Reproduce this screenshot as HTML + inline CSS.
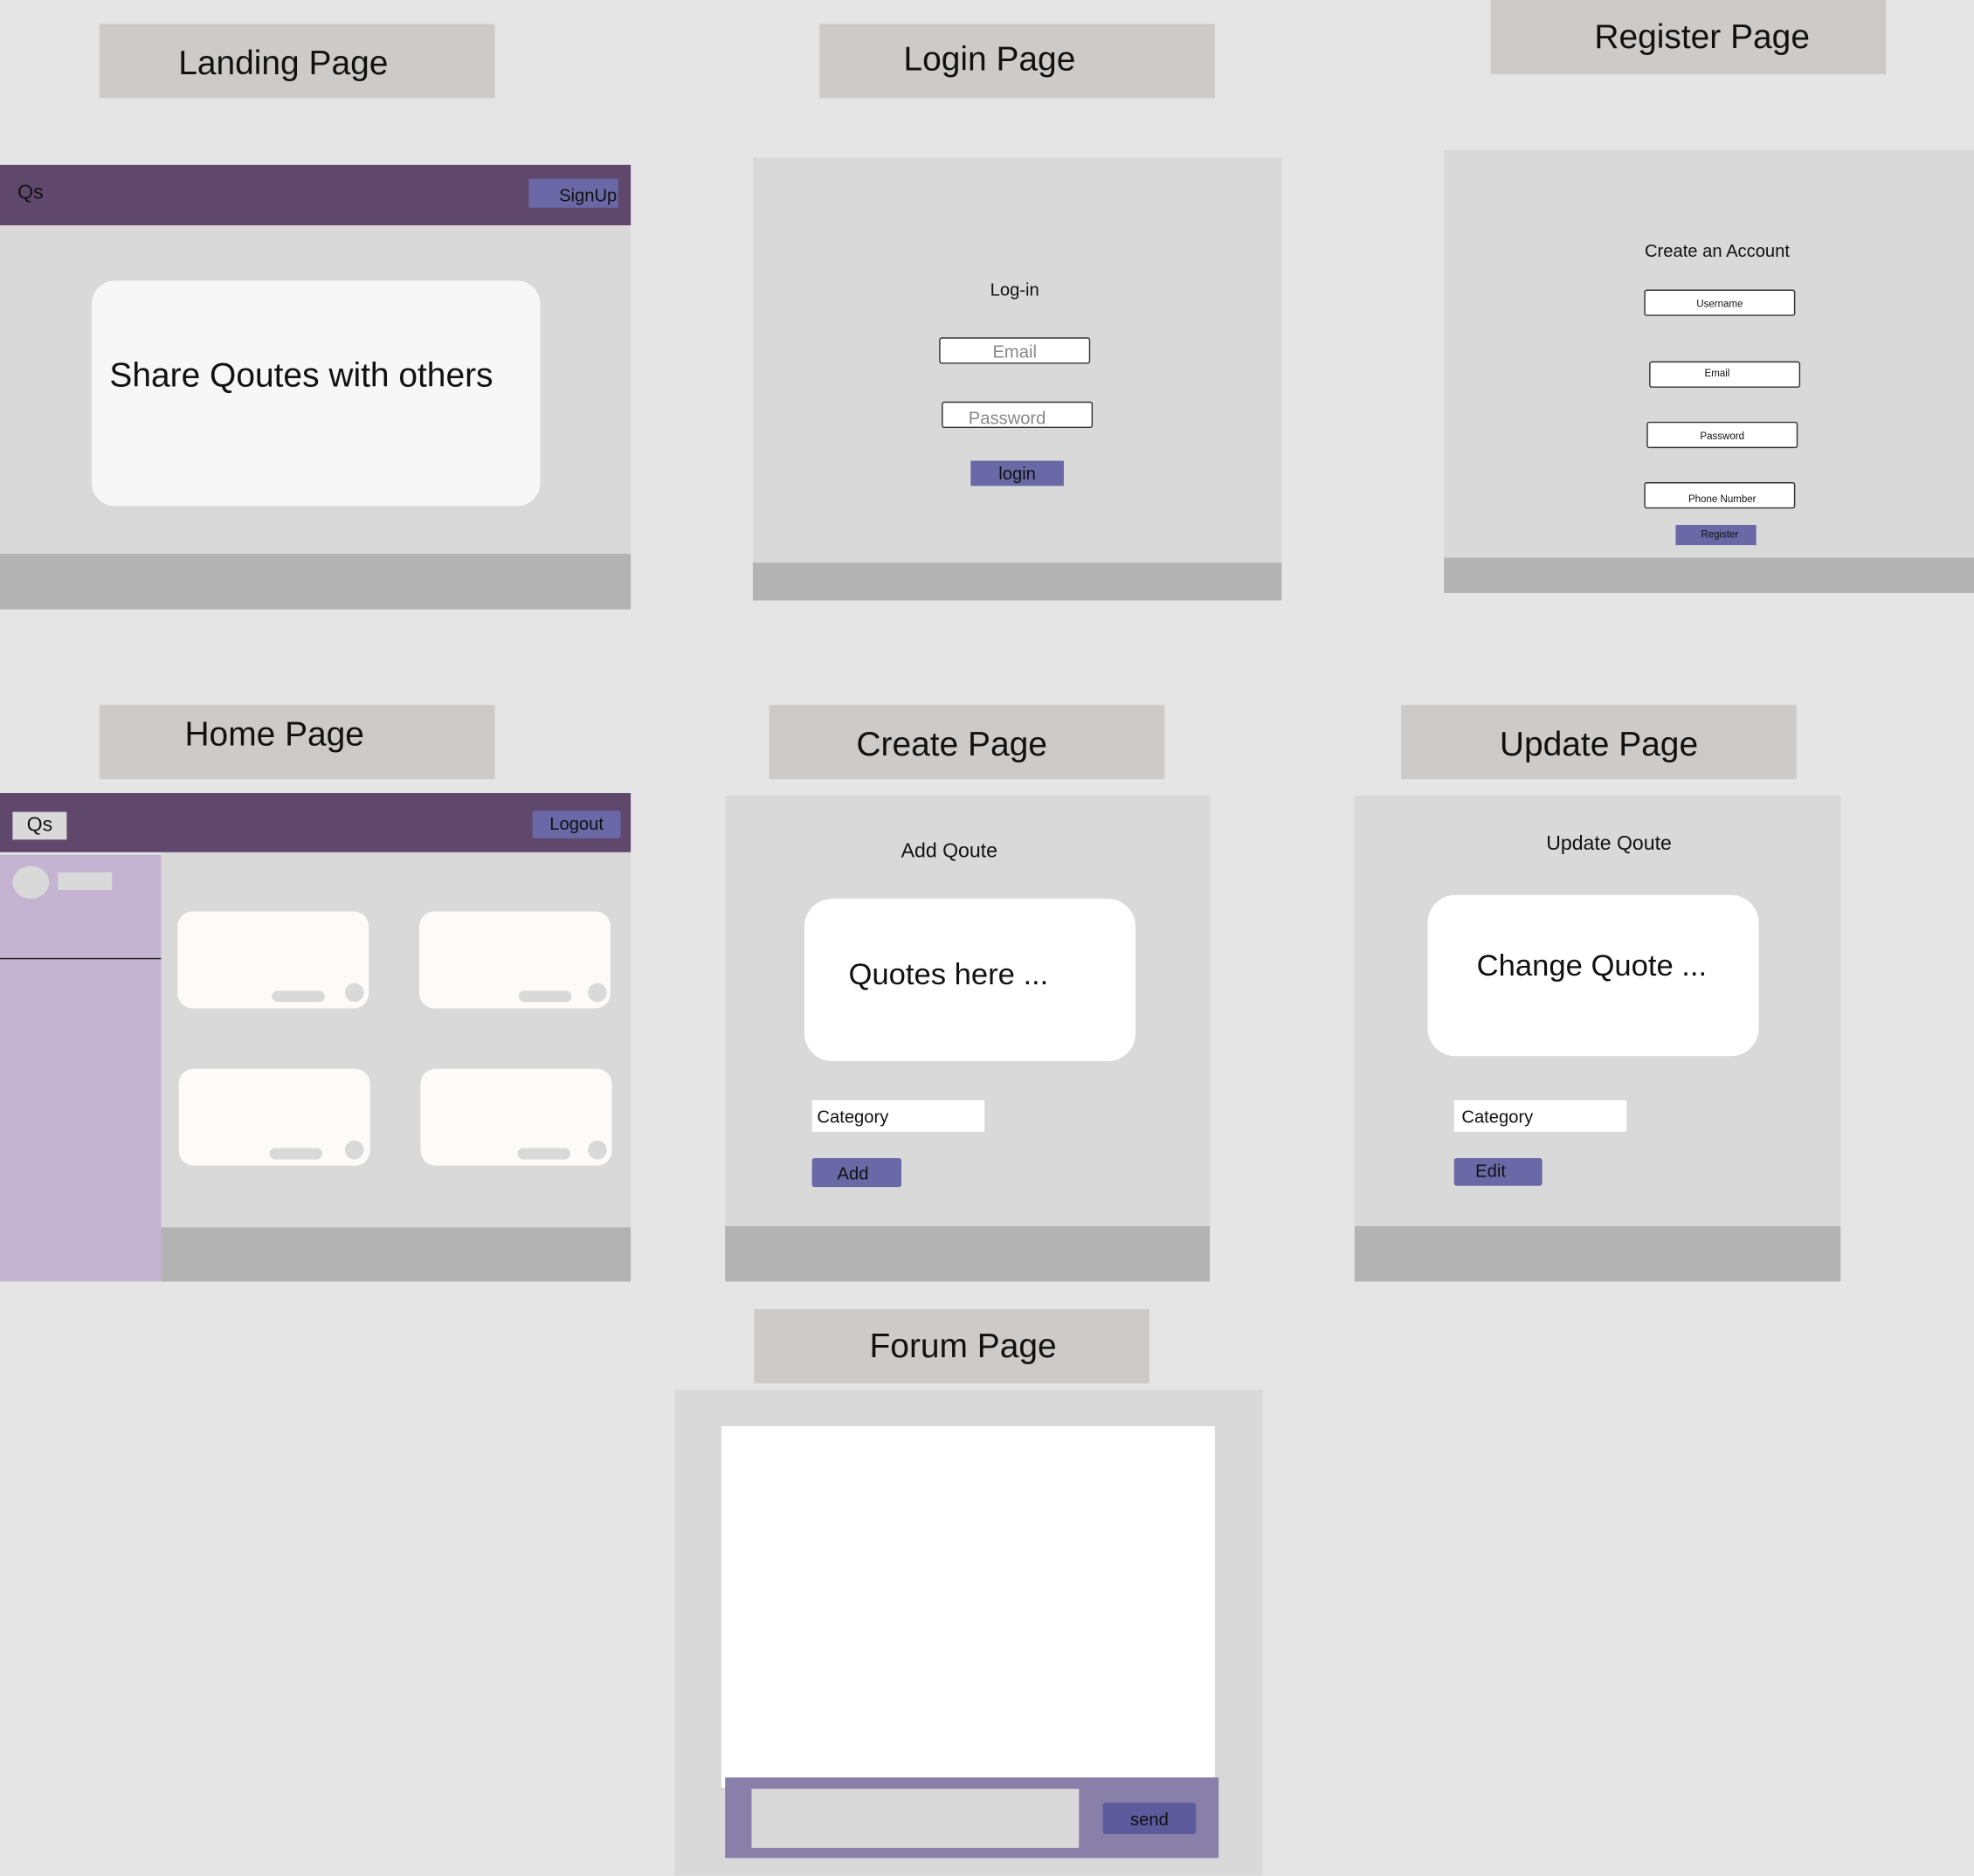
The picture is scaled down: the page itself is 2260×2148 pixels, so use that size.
<!DOCTYPE html>
<html><head><meta charset="utf-8"><style>
html,body{margin:0;padding:0;background:#e5e5e5;overflow:hidden;width:2260px;height:2148px}
#w{position:absolute;left:0;top:0;width:1568px;height:1490px;transform:scale(1.44133);transform-origin:0 0;font-family:"Liberation Sans",sans-serif;color:#111}
#w div{position:absolute;box-sizing:border-box}
.t{background:#cccbc9;width:314px;height:59px;font-size:27px;text-align:center;line-height:59px}
.fr{background:#d9d9d9}
.ft{background:#b3b3b3}
.in{background:#fff;border:1px solid #333;border-radius:2px;text-align:center;color:#888}
.bt{background:#6a68a6;text-align:center;color:#111}
.cd{background:#fcfbf9;border-radius:12px;width:152px;height:77px}
.pl{background:#d9d9d9;border-radius:5px;width:42px;height:9px}
.ci{background:#d9d9d9;border-radius:50%;width:15px;height:15px}
</style></head><body><div id="w">
<!-- Landing -->
<div class="t" style="left:79px;top:19px;line-height:62px;text-indent:-22px">Landing Page</div>
<div class="fr" style="left:0;top:131px;width:501px;height:353px"></div>
<div style="left:0;top:131px;width:501px;height:48px;background:#60486d"></div>
<div style="left:14px;top:145px;font-size:16px">Qs</div>
<div class="bt" style="left:420px;top:142px;width:71px;height:23px;font-size:14px;line-height:26px;text-align:right;padding-right:1px">SignUp</div>
<div style="left:73px;top:223px;width:356px;height:179px;background:#f7f7f7;border-radius:18px;font-size:27px;padding:60px 0 0 14px">Share Qoutes with others</div>
<div class="ft" style="left:0;top:440px;width:501px;height:44px"></div>
<!-- Login -->
<div class="t" style="left:651px;top:19px;line-height:56px;text-indent:-44px">Login Page</div>
<div class="fr" style="left:598px;top:125px;width:420px;height:352px"></div>
<div style="left:598px;top:222px;width:416px;text-align:center;font-size:14px">Log-in</div>
<div class="in" style="left:746px;top:268px;width:120px;height:21px;font-size:14px;line-height:21px">Email</div>
<div class="in" style="left:748px;top:319px;width:120px;height:21px;font-size:14px;line-height:25px;text-indent:-16px">Password</div>
<div class="bt" style="left:771px;top:366px;width:74px;height:20px;font-size:14px;line-height:20px">login</div>
<div class="ft" style="left:598px;top:447px;width:420px;height:30px"></div>
<!-- Register -->
<div class="t" style="left:1184px;top:0;line-height:59px;text-indent:22px">Register Page</div>
<div class="fr" style="left:1147px;top:119px;width:421px;height:352px"></div>
<div style="left:1147px;top:191px;width:434px;text-align:center;font-size:14px">Create an Account</div>
<div class="in" style="left:1306px;top:230px;width:120px;height:21px;font-size:8px;line-height:21px;color:#111">Username</div>
<div class="in" style="left:1310px;top:287px;width:120px;height:21px;font-size:8px;line-height:17px;color:#111;text-indent:-12px">Email</div>
<div class="in" style="left:1308px;top:335px;width:120px;height:21px;font-size:8px;line-height:21px;color:#111">Password</div>
<div class="in" style="left:1306px;top:383px;width:120px;height:21px;font-size:8px;line-height:25px;color:#111;text-indent:4px">Phone Number</div>
<div class="bt" style="left:1331px;top:417px;width:64px;height:16px;font-size:8px;line-height:16px;text-indent:6px">Register</div>
<div class="ft" style="left:1147px;top:443px;width:421px;height:28px"></div>
<!-- Home -->
<div class="t" style="left:79px;top:560px;line-height:46px;text-indent:-36px">Home Page</div>
<div class="fr" style="left:128px;top:677px;width:373px;height:341px"></div>
<div style="left:0;top:630px;width:501px;height:47px;background:#60486d"></div>
<div style="left:10px;top:645px;width:43px;height:22px;background:#d9d9d9;font-size:16px;text-align:center;line-height:22px">Qs</div>
<div class="bt" style="left:423px;top:644px;width:70px;height:22px;font-size:14px;line-height:20px;border-radius:2px">Logout</div>
<div style="left:0;top:679px;width:128px;height:339px;background:#c4b4d2"></div>
<div style="left:0;top:761px;width:128px;height:1px;background:#222"></div>
<div style="left:10px;top:688px;width:29px;height:26px;border-radius:50%;background:#d9d9d9"></div>
<div style="left:46px;top:693px;width:43px;height:14px;background:#d9d9d9"></div>
<div class="cd" style="left:141px;top:724px"></div><div class="pl" style="left:216px;top:787px"></div><div class="ci" style="left:274px;top:781px"></div>
<div class="cd" style="left:333px;top:724px"></div><div class="pl" style="left:412px;top:787px"></div><div class="ci" style="left:467px;top:781px"></div>
<div class="cd" style="left:142px;top:849px"></div><div class="pl" style="left:214px;top:912px"></div><div class="ci" style="left:274px;top:906px"></div>
<div class="cd" style="left:334px;top:849px"></div><div class="pl" style="left:411px;top:912px"></div><div class="ci" style="left:467px;top:906px"></div>
<div class="ft" style="left:128px;top:975px;width:373px;height:43px"></div>
<!-- Create -->
<div class="t" style="left:611px;top:560px;line-height:62px;text-indent:-24px">Create Page</div>
<div class="fr" style="left:576px;top:632px;width:385px;height:386px"></div>
<div style="left:576px;top:668px;width:356px;text-align:center;font-size:16px">Add Qoute</div>
<div style="left:639px;top:714px;width:263px;height:129px;background:#fff;border-radius:22px;font-size:24px;padding:47px 0 0 35px">Quotes here ...</div>
<div style="left:645px;top:874px;width:137px;height:25px;background:#fff;font-size:14px;line-height:26px;padding-left:4px">Category</div>
<div class="bt" style="left:645px;top:920px;width:71px;height:23px;font-size:14px;line-height:25px;border-radius:2px;text-indent:-6px">Add</div>
<div class="ft" style="left:576px;top:974px;width:385px;height:44px"></div>
<!-- Update -->
<div class="t" style="left:1113px;top:560px;line-height:62px">Update Page</div>
<div class="fr" style="left:1076px;top:632px;width:386px;height:386px"></div>
<div style="left:1076px;top:662px;width:404px;text-align:center;font-size:16px">Update Qoute</div>
<div style="left:1134px;top:711px;width:263px;height:128px;background:#fff;border-radius:22px;font-size:24px;padding:43px 0 0 39px">Change Quote ...</div>
<div style="left:1155px;top:874px;width:137px;height:25px;background:#fff;font-size:14px;line-height:26px;padding-left:6px">Category</div>
<div class="bt" style="left:1155px;top:920px;width:70px;height:22px;font-size:14px;line-height:20px;border-radius:2px;text-indent:-12px">Edit</div>
<div class="ft" style="left:1076px;top:974px;width:386px;height:44px"></div>
<!-- Forum -->
<div class="t" style="left:599px;top:1040px;line-height:59px;text-indent:18px">Forum Page</div>
<div class="fr" style="left:536px;top:1104px;width:467px;height:386px"></div>
<div style="left:573px;top:1133px;width:392px;height:287px;background:#fff"></div>
<div style="left:576px;top:1412px;width:392px;height:64px;background:#8880a9"></div>
<div style="left:597px;top:1421px;width:260px;height:47px;background:#d9d9d9"></div>
<div class="bt" style="left:876px;top:1432px;width:74px;height:25px;font-size:14px;line-height:27px;background:#5d5a9c;border-radius:2px">send</div>
</div></body></html>
